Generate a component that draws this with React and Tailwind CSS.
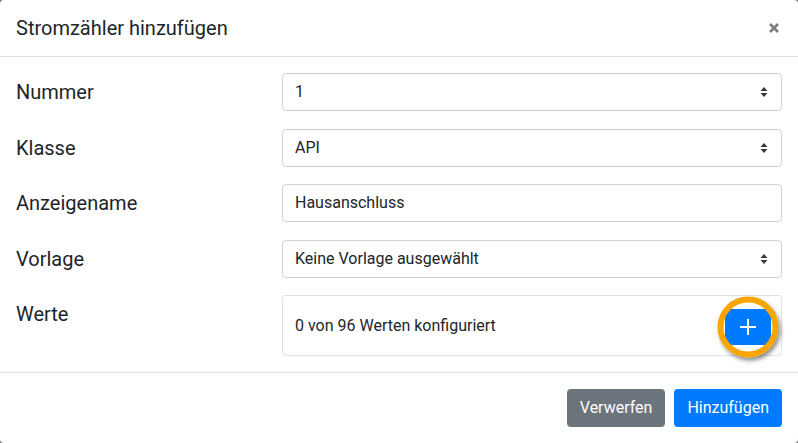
import React from 'react';

function SortArrows() {
  return (
    <svg width="8" height="10" viewBox="0 0 8 10" className="shrink-0">
      <path d="M4 0L0.5 4h7z M4 10L0.5 6h7z" fill="#343a40" />
    </svg>
  );
}

function SelectBox({ value }) {
  return (
    <div className="h-[38px] flex items-center justify-between border border-[#ced4da] rounded-[4px] pl-3 pr-[13px] text-[16px] text-[#212529] bg-white">
      <span>{value}</span>
      <SortArrows />
    </div>
  );
}

function Label({ children }) {
  return <div className="text-[20px] leading-[38px] text-[#212529]">{children}</div>;
}

export default function App() {
  return (
    <div className="w-[798px] h-[443px] bg-[#7a7a7a] font-['Roboto',sans-serif]">
      <div className="w-full h-full bg-white rounded-[4px] flex flex-col">
        <div className="h-[57px] flex items-center justify-between px-4 border-b border-[#dee2e6]">
          <h5 className="text-[20px] text-[#212529] -mt-[1px]">Stromzähler hinzufügen</h5>
          <svg width="10" height="10" viewBox="0 0 10 10" className="mr-[3px] -mt-[1px]">
            <path d="M1 1L9 9M9 1L1 9" stroke="#7b7b7b" strokeWidth="2.6" />
          </svg>
        </div>

        <div className="px-4 pt-4 pb-4 grid grid-cols-[266px_1fr] gap-y-[17.5px] border-b border-[#dee2e6]">
          <Label>Nummer</Label>
          <SelectBox value="1" />

          <Label>Klasse</Label>
          <SelectBox value="API" />

          <Label>Anzeigename</Label>
          <div className="h-[38px] flex items-center border border-[#ced4da] rounded-[4px] px-3 text-[16px] text-[#212529]">
            Hausanschluss
          </div>

          <Label>Vorlage</Label>
          <SelectBox value="Keine Vorlage ausgewählt" />

          <Label>Werte</Label>
          <div className="h-[61px] flex items-center justify-between border border-[#dee2e6] rounded-[4px] pl-3 pr-[10px] text-[16px] text-[#212529]">
            <span className="mt-[1px]">0 von 96 Werten konfiguriert</span>
            <div className="relative mt-[2px]">
              <button className="w-[46px] h-[36px] bg-[#007bff] flex items-center justify-center">
                <svg width="18" height="18" viewBox="0 0 18 18">
                  <path d="M9 1v16M1 9h16" stroke="white" strokeWidth="2" />
                </svg>
              </button>
              <div className="absolute left-1/2 top-1/2 -translate-x-1/2 -translate-y-1/2 w-[61px] h-[61px] rounded-full border-[6px] border-[#f9a602] shadow-[2px_3px_4px_rgba(0,0,0,0.45)]" />
            </div>
          </div>
        </div>

        <div className="flex-1 flex items-start justify-end gap-[9px] px-4 pt-4">
          <button className="h-[38px] px-[13px] rounded-[4px] bg-[#6c757d] text-white text-[16px]">Verwerfen</button>
          <button className="h-[38px] px-[13px] rounded-[4px] bg-[#007bff] text-white text-[16px]">Hinzufügen</button>
        </div>
      </div>
    </div>
  );
}
